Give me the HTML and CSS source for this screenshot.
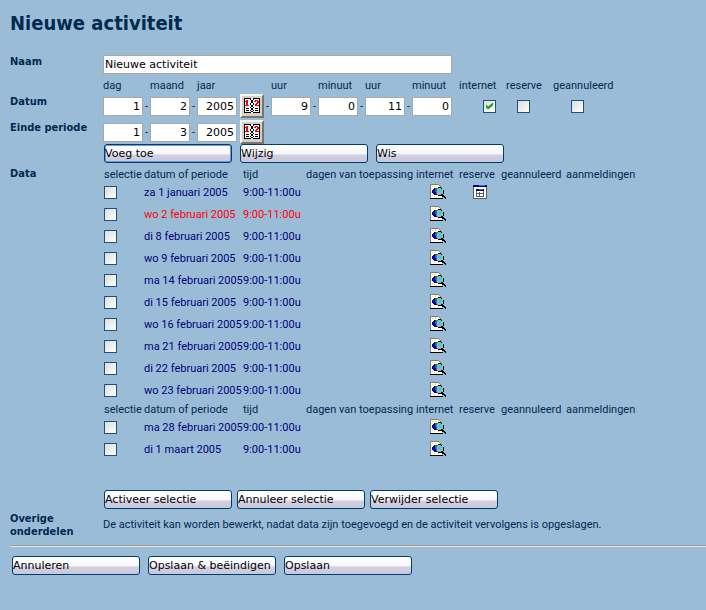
FILE: index.html
```html
<!DOCTYPE html>
<html lang="nl">
<head>
<meta charset="utf-8">
<title>Nieuwe activiteit</title>
<link rel="stylesheet" href="styles.css">
</head>
<body>
<svg class="sprites" aria-hidden="true">
  <symbol id="calendar" viewBox="0 0 16 16">
    <path fill="#fff" d="M0 0h16v15H0z"/>
    <path fill="#000" d="M0 0h7v1H0zM9 0h7v1H9zM0 0h1v15H0zM15 0h1v15h-1zM0 14h7v1H0zM9 14h7v1H9zM6 1h1v1H6zM9 1h1v1H9zM7 2h2v3H7zM6 5h1v2H6zM9 5h1v2H9zM7 7h2v2H7zM6 9h1v1H6zM9 9h1v1H9zM7 10h2v2H7zM6 12h1v1H6zM9 12h1v1H9zM7 13h2v1H7zM2 10h3v1H2zM11 10h3v1h-3zM2 12h3v1H2zM11 12h3v1h-3z"/>
    <path fill="#f00" d="M2 2h2v5H2zM1 3h1v1H1zM1 7h4v1H1zM11 2h3v1h-3zM10 3h2v1h-2zM13 3h2v2h-2zM12 5h2v1h-2zM11 6h2v1h-2zM11 7h4v1h-4z"/>
  </symbol>
  <symbol id="preview" viewBox="0 0 16 16">
    <path fill="#fff" d="M1 1h8l3 3v10H1z"/>
    <path fill="#808080" d="M0 0h9v1H0zM0 1h1v13H0zM9 1h1v1H9zM10 2h1v1h-1zM11 3h1v1h-1z"/>
    <path fill="#ffe93b" d="M2 2h1v1H2zM5 1h1v2H5zM8 2h1v1H8zM1 4h1v1H1zM1 8h1v1H1zM2 11h1v1H2zM4 12h1v1H4zM8 12h1v1H8z"/>
    <path fill="#000080" d="M4 4h4v1H4zM3 5h5v5H3zM4 10h4v1H4zM2 6h1v3H2z"/>
    <path fill="#00f" d="M3 6h2v3H3zM5 9h1v2H5z"/>
    <path fill="#087b32" d="M5 4h2v2H5zM5 6h1v2H5zM6 8h2v2H6z"/>
    <path fill="#a4b4b8" d="M8 4h4v1H8zM7 5h6v5H7zM8 10h4v1H8z"/>
    <path fill="#00e5ef" d="M9 5h2v1H9zM8 6h3v2H8zM9 8h2v1H9z"/>
    <path fill="#606870" d="M8 3h3v1H8zM7 4h1v1H7zM6 5h1v5H6zM7 10h1v1H7z"/>
    <path fill="#000" d="M8 3h3v1H8zM11 4h1v1h-1zM13 6h1v4h-1zM8 11h3v1H8zM11 10h2v2h-2zM13 11h1v2h-1zM14 12h1v2h-1zM15 13h1v2h-1zM12 12h1v1h-1zM0 14h13v1H0z"/>
  </symbol>
  <symbol id="window" viewBox="0 0 14 14">
    <path fill="#fff" d="M0 0h14v14H0z"/>
    <path fill="#5b5b62" d="M0 2h1v12H0zM13 2h1v12h-1zM1 13h12v1H1z"/>
    <path fill="#000080" d="M0 0h14v2H0zM3 4h8v2H3z"/>
    <path fill="#3478c4" d="M6 0h6v1H6zM6 4h4v1H6z"/>
    <path fill="#5b5b62" d="M3 6h1v6H3zM10 6h1v6h-1zM4 11h6v1H4zM6 7h1v4H6zM4 8h6v1H4z"/>
  </symbol>
</svg>
<main>
  <h1>Nieuwe activiteit</h1>
  <form class="activity">
    <label class="name" for="naam">Naam</label>
    <div><input class="field title" id="naam" type="text" value="Nieuwe activiteit"></div>

    <div class="name dates-name"><span>Datum</span><span>Einde periode</span></div>
    <div class="period">
      <div class="dates">
        <label class="c1" for="d1">dag</label><label class="c3" for="m1">maand</label><label class="c5" for="j1">jaar</label>
        <label class="c9" for="u1">uur</label><label class="c11" for="n1">minuut</label><label class="c13" for="u2">uur</label><label class="c15" for="n2">minuut</label>
        <label class="c17" for="internet">internet</label><label class="c19" for="reserve">reserve</label><label class="c21" for="geannuleerd">geannuleerd</label>

        <input class="field c1" id="d1" value="1"><span>-</span><input class="field" id="m1" value="2"><span>-</span><input class="field" id="j1" value="2005">
        <button class="pick c7" type="button" aria-label="Kies datum"><svg><use href="#calendar"/></svg></button><span>-</span>
        <input class="field" id="u1" value="9"><span>-</span><input class="field" id="n1" value="0"><span>-</span><input class="field" id="u2" value="11"><span>-</span><input class="field" id="n2" value="0">
        <input class="check c17" id="internet" type="checkbox" checked><input class="check c19" id="reserve" type="checkbox"><input class="check c21" id="geannuleerd" type="checkbox">

        <input class="field c1" aria-label="Einde dag" value="1"><span>-</span><input class="field" aria-label="Einde maand" value="3"><span>-</span><input class="field" aria-label="Einde jaar" value="2005">
        <button class="pick c7" type="button" aria-label="Kies einddatum"><svg><use href="#calendar"/></svg></button>
      </div>
      <div class="buttons wide">
        <button class="btn default" type="button">Voeg toe</button><button class="btn" type="button">Wijzig</button><button class="btn" type="button">Wis</button>
      </div>
    </div>

    <div class="name data-name">Data</div>
    <div>
      <table class="data">
        <colgroup><col class="w-sel"><col class="w-date"><col class="w-time"><col class="w-days"><col class="w-net"><col class="w-res"><col class="w-ann"><col class="w-reg"></colgroup>
        <tbody>
          <tr class="head"><th>selectie</th><th>datum of periode</th><th>tijd</th><th>dagen van toepassing</th><th>internet</th><th>reserve</th><th>geannuleerd</th><th>aanmeldingen</th></tr>
          <tr><td><input class="check" type="checkbox" aria-label="za 1 januari 2005"></td><td>za 1 januari 2005</td><td>9:00-11:00u</td><td></td><td><svg class="net"><use href="#preview"/></svg></td><td><svg class="res"><use href="#window"/></svg></td><td></td><td></td></tr>
          <tr class="off"><td><input class="check" type="checkbox" aria-label="wo 2 februari 2005"></td><td>wo 2 februari 2005</td><td>9:00-11:00u</td><td></td><td><svg class="net"><use href="#preview"/></svg></td><td></td><td></td><td></td></tr>
          <tr><td><input class="check" type="checkbox" aria-label="di 8 februari 2005"></td><td>di 8 februari 2005</td><td>9:00-11:00u</td><td></td><td><svg class="net"><use href="#preview"/></svg></td><td></td><td></td><td></td></tr>
          <tr><td><input class="check" type="checkbox" aria-label="wo 9 februari 2005"></td><td>wo 9 februari 2005</td><td>9:00-11:00u</td><td></td><td><svg class="net"><use href="#preview"/></svg></td><td></td><td></td><td></td></tr>
          <tr><td><input class="check" type="checkbox" aria-label="ma 14 februari 2005"></td><td>ma 14 februari 2005</td><td>9:00-11:00u</td><td></td><td><svg class="net"><use href="#preview"/></svg></td><td></td><td></td><td></td></tr>
          <tr><td><input class="check" type="checkbox" aria-label="di 15 februari 2005"></td><td>di 15 februari 2005</td><td>9:00-11:00u</td><td></td><td><svg class="net"><use href="#preview"/></svg></td><td></td><td></td><td></td></tr>
          <tr><td><input class="check" type="checkbox" aria-label="wo 16 februari 2005"></td><td>wo 16 februari 2005</td><td>9:00-11:00u</td><td></td><td><svg class="net"><use href="#preview"/></svg></td><td></td><td></td><td></td></tr>
          <tr><td><input class="check" type="checkbox" aria-label="ma 21 februari 2005"></td><td>ma 21 februari 2005</td><td>9:00-11:00u</td><td></td><td><svg class="net"><use href="#preview"/></svg></td><td></td><td></td><td></td></tr>
          <tr><td><input class="check" type="checkbox" aria-label="di 22 februari 2005"></td><td>di 22 februari 2005</td><td>9:00-11:00u</td><td></td><td><svg class="net"><use href="#preview"/></svg></td><td></td><td></td><td></td></tr>
          <tr><td><input class="check" type="checkbox" aria-label="wo 23 februari 2005"></td><td>wo 23 februari 2005</td><td>9:00-11:00u</td><td></td><td><svg class="net"><use href="#preview"/></svg></td><td></td><td></td><td></td></tr>
          <tr class="head"><th>selectie</th><th>datum of periode</th><th>tijd</th><th>dagen van toepassing</th><th>internet</th><th>reserve</th><th>geannuleerd</th><th>aanmeldingen</th></tr>
          <tr><td><input class="check" type="checkbox" aria-label="ma 28 februari 2005"></td><td>ma 28 februari 2005</td><td>9:00-11:00u</td><td></td><td><svg class="net"><use href="#preview"/></svg></td><td></td><td></td><td></td></tr>
          <tr><td><input class="check" type="checkbox" aria-label="di 1 maart 2005"></td><td>di 1 maart 2005</td><td>9:00-11:00u</td><td></td><td><svg class="net"><use href="#preview"/></svg></td><td></td><td></td><td></td></tr>
        </tbody>
      </table>
      <div class="buttons selection">
        <button class="btn" type="button">Activeer selectie</button><button class="btn" type="button">Annuleer selectie</button><button class="btn" type="button">Verwijder selectie</button>
      </div>
    </div>

    <div class="name">Overige onderdelen</div>
    <p>De activiteit kan worden bewerkt, nadat data zijn toegevoegd en de activiteit vervolgens is opgeslagen.</p>
  </form>
  <hr>
  <div class="buttons wide actions">
    <button class="btn" type="button">Annuleren</button><button class="btn" type="button">Opslaan &amp; beëindigen</button><button class="btn" type="button">Opslaan</button>
  </div>
</main>
</body>
</html>
```
FILE: styles.css
```css
* { box-sizing: border-box; }

body {
  margin: 0;
  background: #9bbcd7;
  color: #002a50;
  font: 11px/13px Roboto, sans-serif;
}

.sprites { display: none; }

main { padding: 10px 0 20px 10px; }

h1,
.name {
  font-family: "DejaVu Sans Condensed", "DejaVu Sans", sans-serif;
  font-weight: bold;
}

h1 {
  margin: 0 0 19px;
  font-size: 20px;
  line-height: 26px;
}

.activity {
  display: grid;
  grid-template-columns: 85px 1fr;
  column-gap: 8px;
}

.dates-name {
  display: grid;
  align-content: start;
  row-gap: 13px;
  padding-top: 21px;
}

.data-name { padding-top: 4px; }

.field {
  width: 100%;
  height: 19px;
  margin: 0;
  padding: 0 2px;
  border: 1px solid #a9a9a9;
  background: #fff;
  color: #000;
  font: 11px "DejaVu Sans", sans-serif;
  text-align: right;
}

.title {
  display: block;
  width: 349px;
  padding: 0 1px;
  text-align: left;
}

.dates {
  display: grid;
  grid-template-columns: 40px 7px 40px 7px 40px 3px 24px 7px 40px 7px 40px 7px 40px 7px 40px 7px 37px 10px 35px 12px 49px;
  grid-template-rows: 13px 24px 24px;
  row-gap: 2px;
  align-items: center;
  padding-top: 5px;
  white-space: nowrap;
}

.dates span { text-align: center; }

.c1 { grid-column: 1; }
.c3 { grid-column: 3; }
.c5 { grid-column: 5; }
.c7 { grid-column: 7; }
.c9 { grid-column: 9; }
.c11 { grid-column: 11; }
.c13 { grid-column: 13; }
.c15 { grid-column: 15; }
.c17 { grid-column: 17; }
.c19 { grid-column: 19; }
.c21 { grid-column: 21; }

.check {
  appearance: none;
  display: block;
  width: 13px;
  height: 13px;
  margin: 0;
  border: 1px solid #1c5180;
  background: linear-gradient(135deg, #dcdcd7, #fff);
}

.dates .check { justify-self: center; }
.dates .check.c17 { justify-self: end; }

.check:checked::before {
  content: "";
  display: block;
  width: 11px;
  height: 11px;
  background: #21a121;
  clip-path: polygon(2px 4px, 4px 6px, 9px 2px, 9px 5px, 4px 9px, 2px 7px);
}

.pick {
  display: grid;
  place-items: center;
  width: 24px;
  height: 24px;
  padding: 0;
  border: 2px solid;
  border-color: #f4f3ee #77756f #77756f #f4f3ee;
  background: #d4d0c8;
}

.pick svg {
  width: 16px;
  height: 16px;
  shape-rendering: crispEdges;
}

.buttons {
  display: flex;
  gap: 5px;
  padding-left: 1px;
}

.wide { gap: 8px; }

.btn {
  width: 128px;
  height: 19px;
  padding: 0;
  border: 1px solid #003c74;
  border-radius: 3px;
  background: linear-gradient(#fff, #f7f7fb 50%, #d2d0e2 60%, #c8c8d8);
  color: #000;
  font: 11px "DejaVu Sans", sans-serif;
  text-align: left;
  white-space: nowrap;
}

.default { box-shadow: inset 0 0 0 1px #6f97df; }

.data {
  width: 537px;
  margin-top: 3px;
  border-collapse: collapse;
  table-layout: fixed;
  color: #00007b;
  white-space: nowrap;
}

.data th,
.data td {
  padding: 0;
  text-align: left;
  font-weight: normal;
}

.data tr > :first-child { padding-left: 1px; }

.data tr { height: 22px; }
.data .head { height: 15px; color: #002a50; }
.data .head th { vertical-align: bottom; }
.data .off { color: #f00; }

.w-sel { width: 41px; }
.w-date { width: 99px; }
.w-time { width: 63px; }
.w-days { width: 110px; }
.w-net { width: 43px; }
.w-res { width: 42px; }
.w-ann { width: 65px; }
.w-reg { width: 74px; }

.data svg {
  display: block;
  margin: 0 auto;
  shape-rendering: crispEdges;
}

.net { width: 16px; height: 16px; }
.res { width: 14px; height: 14px; }

.selection { margin: 30px 0 3px; }

p { margin: 6px 0; }

hr {
  height: 2px;
  margin: 7px 0 9px;
  border: 0;
  border-top: 1px solid #a09c9c;
  border-bottom: 1px solid #e4e4e4;
}

.actions { padding-left: 2px; }
```
